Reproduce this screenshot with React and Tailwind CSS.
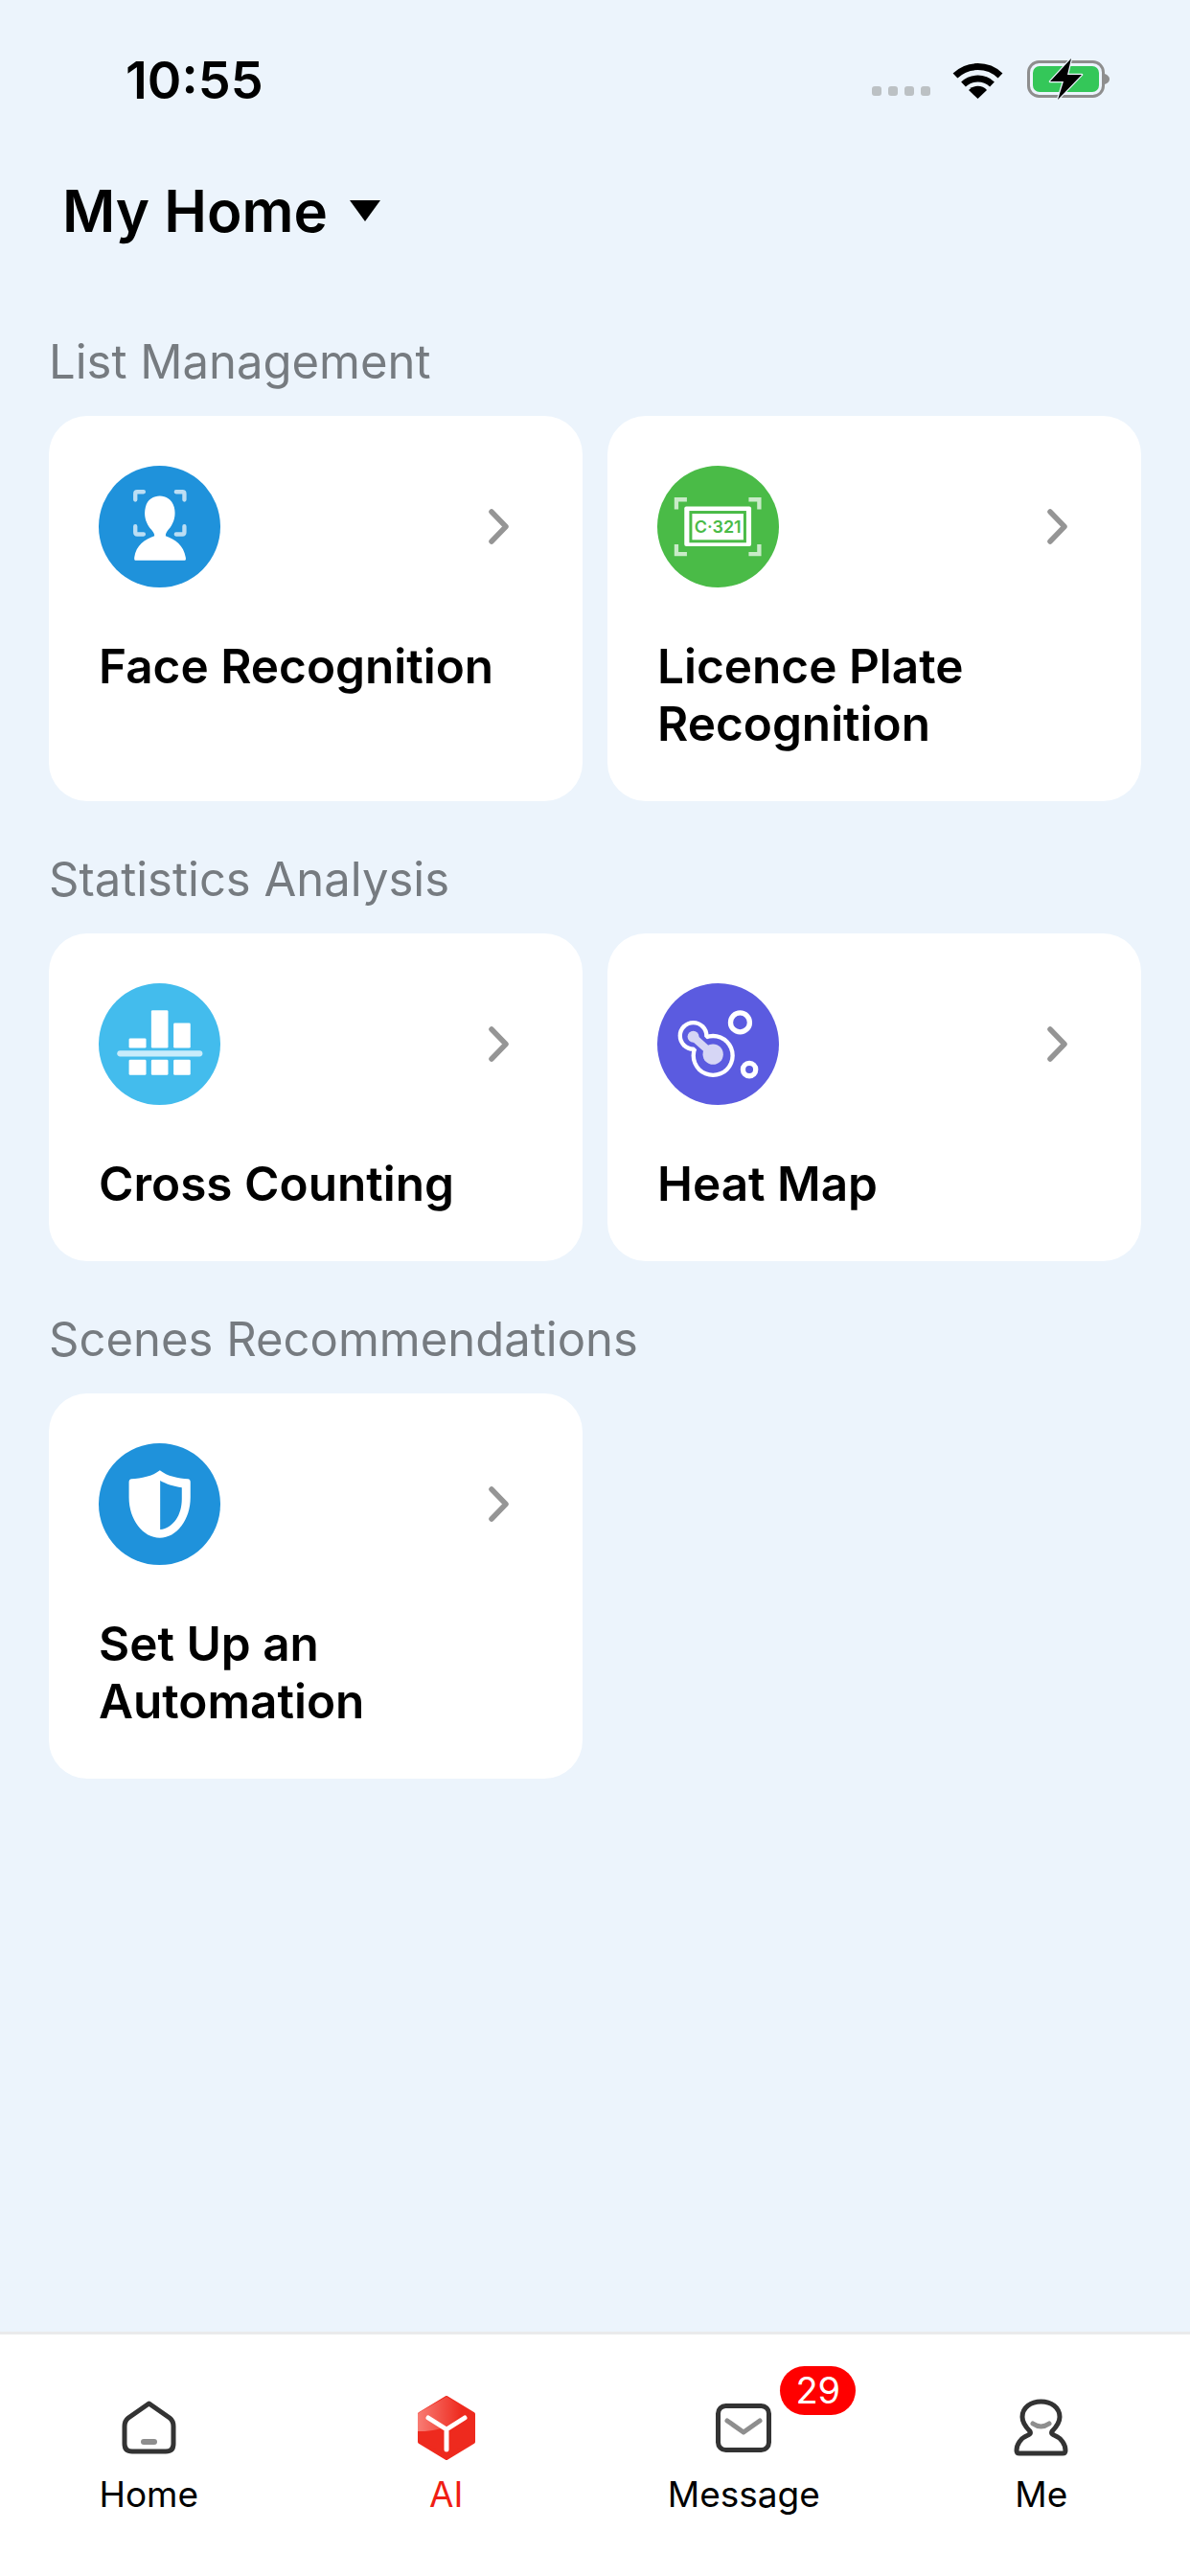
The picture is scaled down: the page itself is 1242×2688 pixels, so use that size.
import React from "react";

const FaceIcon = () => (
  <svg viewBox="125 75 382 382" className="w-[127px] h-[127px]">
    <circle cx="316" cy="266" r="191" fill="#1f92db" />
    <path
      d="M240 372H395Q400 372 398 362C392 325 365 305 335 295C335 285 340 280 350 268C362 250 368 230 362 205C355 180 335 170 317 170C298 170 278 180 272 205C266 230 272 250 284 268C294 280 300 285 300 295C270 305 242 325 237 362Q236 372 240 372Z"
      fill="#fff"
    />
    <path
      d="M240 182V163Q240 157 246 157H266M368 157H388Q394 157 394 163V182M240 265V283Q240 290 246 290H266M368 290H388Q394 290 394 283V265"
      fill="none"
      stroke="#fff"
      strokeOpacity="0.7"
      strokeWidth="13"
      strokeLinecap="round"
    />
  </svg>
);

const PlateIcon = () => (
  <svg viewBox="105 75 382 382" className="w-[127px] h-[127px]">
    <circle cx="296" cy="266" r="191" fill="#4abb47" />
    <path
      d="M165 212V181H198M392 181H425V212M165 322V352H198M392 352H425V322"
      fill="none"
      stroke="#fff"
      strokeOpacity="0.7"
      strokeWidth="13"
    />
    <rect x="190" y="203" width="210" height="125" rx="6" fill="#fff" />
    <rect x="210" y="221" width="170" height="91" fill="#fff" stroke="#4abb47" strokeWidth="9" />
    <text
      x="295"
      y="287"
      textAnchor="middle"
      fill="#4abb47"
      fontSize="54"
      fontWeight="600"
      fontFamily="Inter, sans-serif"
    >
      C·321
    </text>
  </svg>
);

const BarsIcon = () => (
  <svg viewBox="125 75 382 382" className="w-[127px] h-[127px]">
    <circle cx="316" cy="266" r="191" fill="#43bced" />
    <g fill="#fff">
      <rect x="220" y="248" width="54" height="30" rx="4" />
      <rect x="290" y="160" width="53" height="118" rx="4" />
      <rect x="360" y="200" width="53" height="78" rx="4" />
      <rect x="220" y="315" width="54" height="48" rx="4" />
      <rect x="290" y="315" width="53" height="48" rx="4" />
      <rect x="360" y="315" width="53" height="48" rx="4" />
    </g>
    <rect x="183" y="286" width="268" height="19" rx="9.5" fill="#c8ecfb" />
  </svg>
);

const HeatIcon = () => (
  <svg viewBox="105 75 382 382" className="w-[127px] h-[127px]">
    <circle cx="296" cy="266" r="191" fill="#5b5be0" />
    <circle cx="365" cy="198" r="30" fill="none" stroke="#fff" strokeWidth="16" />
    <circle cx="394" cy="346" r="20" fill="none" stroke="#fff" strokeWidth="16" />
    <circle cx="218" cy="240" r="48" fill="#fff" />
    <circle cx="280" cy="302" r="68" fill="#fff" />
    <path d="M218 240L280 302" stroke="#fff" strokeWidth="70" />
    <circle cx="218" cy="240" r="35" fill="#5b5be0" />
    <circle cx="280" cy="302" r="55" fill="#5b5be0" />
    <path d="M218 240L280 302" stroke="#5b5be0" strokeWidth="46" />
    <circle cx="218" cy="243" r="18" fill="#d6d6f5" />
    <circle cx="280" cy="298" r="32" fill="#d6d6f5" />
    <path d="M222 247L272 292" stroke="#d6d6f5" strokeWidth="24" />
  </svg>
);

const ShieldIcon = () => (
  <svg viewBox="125 75 382 382" className="w-[127px] h-[127px]">
    <circle cx="316" cy="266" r="191" fill="#1f92db" />
    <path
      d="M317 160C340 178 375 186 405 187Q413 188 413 197V245C413 315 370 372 317 372C264 372 220 315 220 245V197Q220 188 228 187C258 186 295 178 317 160Z"
      fill="#fff"
    />
    <path d="M318 192C335 202 360 210 386 214V250C386 300 360 340 318 346Z" fill="#1f92db" />
  </svg>
);

const Chevron = () => (
  <svg viewBox="0 0 21 37" className="w-[21px] h-[37px]">
    <path
      d="M3 3L18 18.5L3 34"
      fill="none"
      stroke="#959595"
      strokeWidth="5.5"
      strokeLinecap="round"
      strokeLinejoin="round"
    />
  </svg>
);

const Wifi = () => (
  <svg viewBox="0 0 53 39" className="w-[53px] h-[39px]">
    <path d="M3 15A34 34 0 0 1 50 15" fill="none" stroke="#000" strokeWidth="7" />
    <path d="M11.5 24A22 22 0 0 1 41.5 24" fill="none" stroke="#000" strokeWidth="7" />
    <path d="M26.5 39L17 30A13 13 0 0 1 36 30Z" fill="#000" />
  </svg>
);

const Battery = () => (
  <svg viewBox="0 -3 86 46" className="w-[86px] h-[46px]">
    <rect x="1.5" y="1.5" width="78" height="36" rx="11" fill="none" stroke="#8e8e8e" strokeWidth="3" />
    <rect x="6" y="6" width="69" height="27" rx="7" fill="#34c759" />
    <path d="M81 14V25Q86 23 86 19.5Q86 16 81 14Z" fill="#8e8e8e" />
    <path
      d="M46 -2L24 22H38L32 41L57 15H42Z"
      fill="#000"
      stroke="#ecf4fc"
      strokeWidth="2.5"
      strokeLinejoin="round"
      paintOrder="stroke"
    />
  </svg>
);

const HomeTab = () => (
  <svg viewBox="0 0 57 56" className="w-[57px] h-[56px]">
    <path
      d="M28.5 3L50 18Q54 21 54 27V45Q54 53 46 53H11Q3 53 3 45V27Q3 21 7 18Z"
      fill="none"
      stroke="#333"
      strokeWidth="5"
      strokeLinejoin="round"
    />
    <rect x="20" y="40" width="17" height="6" rx="3" fill="#8e8e8e" />
  </svg>
);

const AiTab = () => (
  <svg viewBox="0 0 60 67" className="w-[60px] h-[67px]">
    <defs>
      <linearGradient id="ai-gloss" x1="0" y1="0.4" x2="1" y2="0.4">
        <stop offset="0" stopColor="#f87c74" />
        <stop offset="1" stopColor="#ee2a1e" />
      </linearGradient>
    </defs>
    <path d="M30 2L58 19V48L30 65L2 48V19Z" fill="#ee2a1e" stroke="#ee2a1e" strokeWidth="4" strokeLinejoin="round" />
    <path d="M30 1L46 11C46 28 24 38 0 37V19Q0 18 2 17Z" fill="url(#ai-gloss)" />
    <path d="M11 23L30 35L49 23M30 35V56" fill="none" stroke="#fff" strokeWidth="5" strokeLinecap="round" strokeLinejoin="round" />
  </svg>
);

const MessageTab = () => (
  <svg viewBox="0 0 58 51" className="w-[58px] h-[51px]">
    <rect x="2.5" y="2.5" width="53" height="46" rx="8" fill="none" stroke="#333" strokeWidth="5" />
    <path d="M12 18L29 30L46 18" fill="none" stroke="#8e8e8e" strokeWidth="5" strokeLinecap="round" strokeLinejoin="round" />
  </svg>
);

const MeTab = () => (
  <svg viewBox="0 0 57 60" className="w-[57px] h-[60px]">
    <path
      d="M17 34C11 28 9 23 9 19C9 9 18 3 28.5 3C39 3 48 9 48 19C48 23 46 28 40 34C39 36 40 37 42 38C50 41 54 48 54 54Q54 57 51 57H6Q3 57 3 54C3 48 7 41 15 38C17 37 18 36 17 34Z"
      fill="none"
      stroke="#333"
      strokeWidth="5"
      strokeLinejoin="round"
    />
    <path d="M20 26Q28.5 32 37 26" fill="none" stroke="#8e8e8e" strokeWidth="5" strokeLinecap="round" />
  </svg>
);

const sections = [
  {
    label: "List Management",
    cards: [
      { title: "Face Recognition", icon: <FaceIcon /> },
      { title: "Licence Plate\nRecognition", icon: <PlateIcon /> },
    ],
  },
  {
    label: "Statistics Analysis",
    cards: [
      { title: "Cross Counting", icon: <BarsIcon /> },
      { title: "Heat Map", icon: <HeatIcon /> },
    ],
  },
  {
    label: "Scenes Recommendations",
    cards: [{ title: "Set Up an\nAutomation", icon: <ShieldIcon /> }],
  },
];

const tabs = [
  { label: "Home", icon: <HomeTab />, color: "text-black" },
  { label: "AI", icon: <AiTab />, color: "text-[#f01e14]" },
  { label: "Message", icon: <MessageTab />, color: "text-black", badge: "29" },
  { label: "Me", icon: <MeTab />, color: "text-black" },
];

const App = () => {
  return (
    <div className="w-[1242px] h-[2688px] flex flex-col bg-[#ecf4fc] font-['Inter',sans-serif] overflow-hidden">
      {/* Status bar */}
      <div className="flex items-center justify-between h-[104px] pt-[58px] pl-[131px] pr-[84px]">
        <span className="text-[54px] leading-[48px] font-semibold text-black translate-y-[3px]">10:55</span>
        <div className="flex items-end">
          <div className="flex gap-[7px] mb-[3px]">
            <span className="w-[10px] h-[10px] rounded-[3px] bg-[#bcc1c4]" />
            <span className="w-[10px] h-[10px] rounded-[3px] bg-[#bcc1c4]" />
            <span className="w-[10px] h-[10px] rounded-[3px] bg-[#bcc1c4]" />
            <span className="w-[10px] h-[10px] rounded-[3px] bg-[#bcc1c4]" />
          </div>
          <div className="ml-[23px]">
            <Wifi />
          </div>
          <div className="ml-[25px] -mb-[3px]">
            <Battery />
          </div>
        </div>
      </div>

      {/* Home selector */}
      <div className="flex items-center gap-[23px] h-[64px] mt-[84px] pl-[65px]">
        <span className="text-[60px] leading-[64px] font-semibold text-black">My Home</span>
        <svg viewBox="0 0 32 22" className="w-[32px] h-[22px]">
          <path d="M0 0H32L16 22Z" fill="#000" />
        </svg>
      </div>

      {/* Sections */}
      <main className="px-[51px] pt-[5px]">
        {sections.map((section) => (
          <section key={section.label} className="mt-[54px] first:mt-[93px]">
            <h2 className="text-[49px] leading-[56px] font-normal text-[#767b80] mb-[28px]">{section.label}</h2>
            <div className="grid grid-cols-2 gap-x-[26px]">
              {section.cards.map((card) => (
                <div key={card.title} className="bg-white rounded-[40px] pl-[52px] pt-[52px] pb-[51px]">
                  <div className="flex items-center justify-between pr-[77px]">
                    {card.icon}
                    <Chevron />
                  </div>
                  <p className="mt-[52px] text-[49.5px] leading-[60px] font-semibold text-black whitespace-pre-line">
                    {card.title}
                  </p>
                </div>
              ))}
            </div>
          </section>
        ))}
      </main>

      {/* Tab bar */}
      <nav className="mt-auto h-[255px] grid grid-cols-4 bg-white border-t-[3px] border-[#e9eaeb] pt-[60px]">
        {tabs.map((tab) => (
          <div key={tab.label} className="flex flex-col items-center">
            <div className="relative h-[74px] flex items-center justify-center">
              {tab.icon}
              {tab.badge && (
                <span className="absolute left-[67px] top-[-27px] w-[79px] h-[51px] rounded-full bg-[#ff0000] text-white text-[38px] leading-[51px] text-center">
                  {tab.badge}
                </span>
              )}
            </div>
            <span className={`mt-[8px] text-[37px] leading-[50px] ${tab.color}`}>{tab.label}</span>
          </div>
        ))}
      </nav>
    </div>
  );
};

export default App;
